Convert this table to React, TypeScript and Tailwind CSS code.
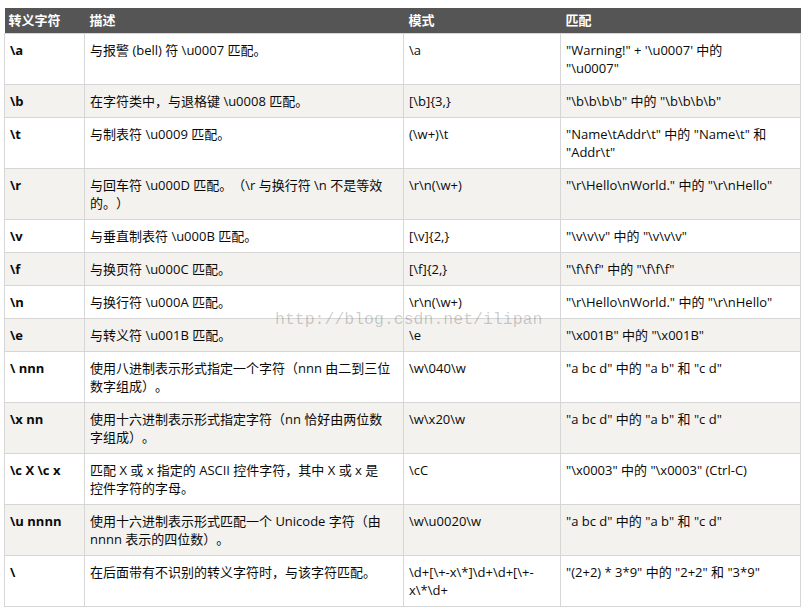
type Row = { esc: string; desc: string; pattern: string; match: string };

// 换行位置按截图里的折行写死
const rows: Row[] = [
  { esc: "\\a", desc: "与报警 (bell) 符 \\u0007 匹配。", pattern: "\\a", match: "\"Warning!\" + '\\u0007' 中的\n\"\\u0007\"" },
  { esc: "\\b", desc: "在字符类中，与退格键 \\u0008 匹配。", pattern: "[\\b]{3,}", match: "\"\\b\\b\\b\\b\" 中的 \"\\b\\b\\b\\b\"" },
  { esc: "\\t", desc: "与制表符 \\u0009 匹配。", pattern: "(\\w+)\\t", match: "\"Name\\tAddr\\t\" 中的 \"Name\\t\" 和\n\"Addr\\t\"" },
  { esc: "\\r", desc: "与回车符 \\u000D 匹配。（\\r 与换行符 \\n 不是等效\n的。）", pattern: "\\r\\n(\\w+)", match: "\"\\r\\Hello\\nWorld.\" 中的 \"\\r\\nHello\"" },
  { esc: "\\v", desc: "与垂直制表符 \\u000B 匹配。", pattern: "[\\v]{2,}", match: "\"\\v\\v\\v\" 中的 \"\\v\\v\\v\"" },
  { esc: "\\f", desc: "与换页符 \\u000C 匹配。", pattern: "[\\f]{2,}", match: "\"\\f\\f\\f\" 中的 \"\\f\\f\\f\"" },
  { esc: "\\n", desc: "与换行符 \\u000A 匹配。", pattern: "\\r\\n(\\w+)", match: "\"\\r\\Hello\\nWorld.\" 中的 \"\\r\\nHello\"" },
  { esc: "\\e", desc: "与转义符 \\u001B 匹配。", pattern: "\\e", match: "\"\\x001B\" 中的 \"\\x001B\"" },
  { esc: "\\ nnn", desc: "使用八进制表示形式指定一个字符（nnn 由二到三位\n数字组成）。", pattern: "\\w\\040\\w", match: "\"a bc d\" 中的 \"a b\" 和 \"c d\"" },
  { esc: "\\x nn", desc: "使用十六进制表示形式指定字符（nn 恰好由两位数\n字组成）。", pattern: "\\w\\x20\\w", match: "\"a bc d\" 中的 \"a b\" 和 \"c d\"" },
  { esc: "\\c X \\c x", desc: "匹配 X 或 x 指定的 ASCII 控件字符，其中 X 或 x 是\n控件字符的字母。", pattern: "\\cC", match: "\"\\x0003\" 中的 \"\\x0003\" (Ctrl-C)" },
  { esc: "\\u nnnn", desc: "使用十六进制表示形式匹配一个 Unicode 字符（由\nnnnn 表示的四位数）。", pattern: "\\w\\u0020\\w", match: "\"a bc d\" 中的 \"a b\" 和 \"c d\"" },
  { esc: "\\", desc: "在后面带有不识别的转义字符时，与该字符匹配。", pattern: "\\d+[\\+-x\\*]\\d+\\d+[\\+-\nx\\*\\d+", match: "\"(2+2) * 3*9\" 中的 \"2+2\" 和 \"3*9\"" },
];

const cell = "border border-[#d6d6d6] px-[5px] pt-[7px] pb-[7px] align-top whitespace-pre-line";

export default function App() {
  return (
    <div
      className="min-h-screen bg-white pl-[4px] pt-[8px] text-[13px] leading-[18px] text-[#0a0a0a] [text-spacing-trim:space-all]"
      style={{ fontFamily: '"Open Sans", "Noto Sans CJK SC", sans-serif' }}
    >
      <div className="relative w-[796px]">
        <table className="w-[796px] table-fixed border-collapse">
          <colgroup>
            <col className="w-[80px]" />
            <col className="w-[319px]" />
            <col className="w-[157px]" />
            <col className="w-[240px]" />
          </colgroup>
          <thead>
            <tr className="h-[25px] bg-[#555555] text-left text-white">
              <th className="px-[4px] font-bold">转义字符</th>
              <th className="px-[5px] font-bold">描述</th>
              <th className="px-[5px] font-bold">模式</th>
              <th className="px-[5px] font-bold">匹配</th>
            </tr>
          </thead>
          <tbody>
            {rows.map((r, i) => (
              <tr key={i} className={i % 2 === 1 ? "bg-[#f3f2ef]" : "bg-white"}>
                <td className={cell + " font-bold"}>{r.esc}</td>
                <td className={cell}>{r.desc}</td>
                <td className={cell}>{r.pattern}</td>
                <td className={cell}>{r.match}</td>
              </tr>
            ))}
          </tbody>
        </table>
        {/* 水印 */}
        <div
          className="pointer-events-none absolute left-[271px] top-[302px] text-[16.5px] leading-[20px] text-black/20"
          style={{ fontFamily: '"Liberation Mono", monospace' }}
        >
          http://blog.csdn.net/ilipan
        </div>
      </div>
    </div>
  );
}
